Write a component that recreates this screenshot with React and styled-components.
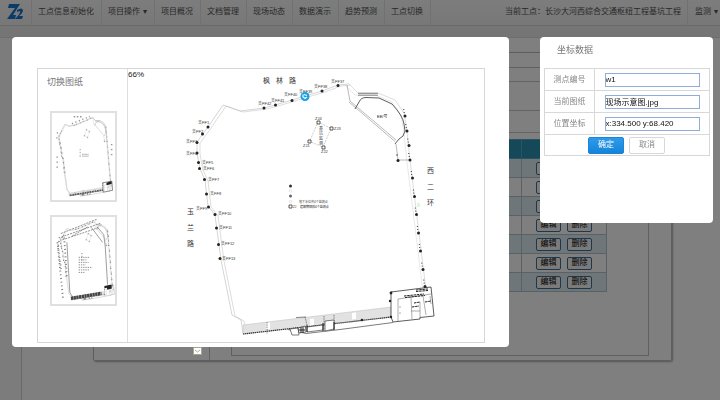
import React from "react";
import styled, { createGlobalStyle } from "styled-components";

const Global = createGlobalStyle`
  *, *::before, *::after { box-sizing: border-box; }
  html, body { margin: 0; background: #fff; }
  body, button, input {
    font-family: "Liberation Sans", "Noto Sans CJK SC", sans-serif;
    font-size: 8px;
    line-height: 12px;
  }
`;

const Page = styled.div`
  min-height: 100vh;
  display: flex;
  flex-direction: column;
  overflow: hidden;
`;

const Nav = styled.nav`
  display: flex;
  align-items: stretch;
  height: 26px;
  background: linear-gradient(#fafafa, #f0f0f0);
  border-bottom: 1px solid #d4d4d4;
  color: #505050;
`;

const LogoBox = styled.a`
  display: flex;
  align-items: center;
  width: 32px;
  padding: 0 0 2px 7px;
  border-right: 1px solid #e2e2e2;
`;

const NavLink = styled.a`
  display: flex;
  align-items: center;
  gap: 3px;
  padding: 0 ${(p) => (p.$last ? 2 : 7)}px 2px ${(p) => (p.$last ? 7 : 6)}px;
  border-right: ${(p) => (p.$last ? "0" : "1px solid #e2e2e2")};
  color: inherit;
  text-decoration: none;
  white-space: nowrap;
`;

const Project = styled.div`
  flex: 1;
  padding: 6px 6px 0 0;
  border-right: 1px solid #e2e2e2;
  text-align: right;
  white-space: nowrap;
`;

const Strip = styled.div`
  height: 12px;
  background: #ebebeb;
  border-bottom: 1px solid #ddd;
`;

const Body = styled.div`
  flex: 1;
  display: flex;
`;

const Rail = styled.aside`
  width: 22px;
  background: #f8f8f8;
  border-right: 1px solid #d0d0d0;
`;

const Main = styled.main`
  flex: 1;
  padding: 14px 48px 39px 71px;
`;

const Panel = styled.section`
  display: flex;
  height: 100%;
  border: 1px solid #bdbdbd;
  border-radius: 2px;
  box-shadow: 1px 1px 2px #aaa;
`;

const Tree = styled.div`
  width: 116px;
  border-right: 1px solid #c4c4c4;
`;

const Content = styled.div`
  flex: 1;
  padding: 14px 22px 4px 21px;
`;

const Inner = styled.div`
  height: 100%;
  border: 1px solid #c0c0c0;
`;

const Tool = styled.div`
  height: ${(p) => p.$h}px;
  border-bottom: 1px solid #c8c8c8;
`;

const Grid = styled.table`
  width: calc(100% - 51px);
  margin: 6px 0 0 10px;
  border-collapse: collapse;
  table-layout: fixed;

  th, td {
    height: 19px;
    padding: 0;
    border: 1px solid #b4c2c9;
    text-align: center;
  }
  th { background: #2a93b4; border-color: #54a9c3; }
  th:last-child { width: 85px; }
  tbody tr:nth-child(odd) { background: #dcecf4; }
`;

const RowButton = styled.button`
  width: 25px;
  height: 13px;
  margin: 0 3px;
  padding: 0;
  border: 1px solid #3f6f96;
  border-radius: 2px;
  background: #f6f6f6;
  color: #000;
  line-height: 10px;
`;

const Overlay = styled.div`
  position: fixed;
  inset: 0;
  display: flex;
  align-items: flex-start;
  gap: 31px;
  padding: 37px 7px 0 12px;
  background: rgba(0, 0, 0, 0.5);
`;

const PlanColumn = styled.div`
  flex: 1;
`;

const Dialog = styled.section`
  border-radius: 4px;
  background: #fff;
`;

const PlanDialog = styled(Dialog)`
  padding: 31px 24px 4px 25px;
`;

const PlanFrame = styled.div`
  display: flex;
  border: 1px solid #d6d6d6;
`;

const Sheets = styled.div`
  width: 90px;
  padding: 4px 10px 0 12px;
  border-right: 1px solid #dedede;
`;

const Heading = styled.h2`
  margin: 0;
  padding-left: ${(p) => p.$indent || 0}px;
  color: #777;
  font-size: 9px;
  font-weight: 400;
  line-height: 18px;
`;

const SheetHeading = styled(Heading)`
  margin: 0 0 20px -3px;
`;

const SheetButton = styled.button`
  display: block;
  width: 67px;
  height: 91px;
  margin-bottom: 13px;
  padding: 0;
  border: 2px solid #e0e0e0;
  background: #fff;
  svg { display: block; width: 100%; height: 100%; }
`;

const Canvas = styled.div`
  position: relative;
  flex: 1;
  > svg { display: block; width: 100%; height: auto; }
`;

const Zoom = styled.span`
  position: absolute;
  top: 0;
  left: 0;
  color: #222;
`;

const Handle = styled.button`
  display: flex;
  align-items: center;
  justify-content: center;
  width: 9px;
  height: 8px;
  margin-left: 181px;
  padding: 0;
  border: 1px solid #a5a58c;
  background: #fff;
`;

const FormDialog = styled(Dialog)`
  width: 173px;
  padding: 4px 3px 67px 4px;
`;

const FormTable = styled.table`
  width: 100%;
  margin-top: 9px;
  border-collapse: collapse;

  th, td {
    height: 22px;
    padding: 0;
    border: 1px solid #d8d8d8;
    color: #888;
    font-weight: 400;
    text-align: center;
  }
  th { width: 50px; }
  tr:last-child td { height: 21px; }
`;

const Field = styled.input`
  display: block;
  width: 95px;
  height: 14px;
  margin: 0 auto;
  padding: 0;
  border: 1px solid #8fadd6;
  border-radius: 0;
  background: #fff;
  color: #111;
`;

const Action = styled.button`
  width: 36px;
  height: 17px;
  margin: 0 3px 0 2px;
  padding: 0;
  border: 1px solid ${(p) => (p.$primary ? "#1a86d8" : "#d8d8d8")};
  border-radius: 2px;
  background: ${(p) => (p.$primary ? "linear-gradient(#2e9bea, #1583d8)" : "#fff")};
  color: ${(p) => (p.$primary ? "#fff" : "#888")};
`;

const Label = styled.text`
  font-family: "Liberation Sans", "Noto Sans CJK SC", sans-serif;
  font-size: ${(p) => p.$size || 3}px;
  fill: ${(p) => p.$color || "#333"};
`;

const POINTS = [
  [208, 127, 198, 123.5, "1"], [202.5, 134, 192, 133, "2"], [197, 142.5, 186, 142.5, "3"],
  [197, 153, 186, 154.5, "4"], [198.5, 162.5, 202, 163.5, "5"], [199.5, 168.5, 203, 169.5, "6"],
  [204.5, 179.5, 208, 180.5, "7"], [206.5, 194, 210, 195, "8"], [208.5, 207, 196, 209.5, "9"],
  [215, 214.5, 218, 214.5, "10"], [216.5, 228, 219, 229, "11"], [218.5, 244.5, 221, 245, "12"],
  [220, 258.5, 222, 259.5, "13"], [264, 108, 258, 104.5, "42"], [275.5, 105, 271, 101.5, "41"],
  [292, 100.5, 284, 96, "40"], [305, 96, 299, 93, "39"], [322, 91, 314, 87.5, "38"],
  [338, 85.5, 331, 82.5, "37"],
];

const EAST = [
  [405, 116], [407, 131], [409, 145.5], [410, 160], [412.5, 178], [414.5, 196.5],
  [416.5, 214.5], [418.5, 233], [420.5, 251], [423, 269.5], [425, 286.5],
];

const WEST_LINE =
  "348,84 338,85 322,91 305,96 292,100 275,105 264,108 240,111 223,105 208,127 197,142 197,153 200,169 205,180 208,206 215,215 221,260 232,315 241,320 243,333";
const EAST_LINE = "348,83 358,93 378,93 395,100 404,113 407,131 410,160 426,290";

function Geometry({ thumb }) {
  return (
    <g fill="none" strokeWidth={thumb ? 1 : 0.5}>
      <polyline points={WEST_LINE} stroke="#aaa" />
      <polyline points={WEST_LINE} stroke="#bbb" transform="translate(3 1)" />
      <polyline points={EAST_LINE} stroke="#bbb" />
      <polyline points={EAST_LINE} stroke="#d2d2d2" transform="translate(-3 2)" />
      <path d="M358 93.3H378M358 95.2H378" stroke="#555" strokeWidth="0.7" />
      <path d="M347 85L350 101L396 140M349 102L395 141.5M396 144L398 160H410" stroke="#aaa" strokeWidth="0.8" />
      <path d="M355 109L359 102Q361 97.5 366 97.5L379 98L392 104Q403 116 404 124L405 131L403 136L399 139L395 144" stroke="#333" strokeWidth="0.8" />
      <polygon points="243,325 391,307 391,317 243,334" fill="#e2e2e2" stroke="#bbb" />
      <path d="M243 334L291 328.5L340 323L391 317" stroke="#333" strokeWidth="1.2" strokeDasharray="1.4 0.6" />
      <path d="M288 329.5L306 333.5L340 329.5L393 322.5" stroke="#444" strokeWidth="0.7" />
      <path d="M266 323L270 322.5V329L266 329.5ZM310 319L314 318.5V325L310 325.5ZM352 313L356 312.5V319L352 319.5Z" fill="#fff" />
      <path d="M267 322V334M305 317L307 325M324 316V331M334 315V330" stroke="#555" strokeWidth="0.7" strokeDasharray="1.5 0.8" />
      <path d="M296 317.5L306 317" stroke="#555" strokeWidth="0.7" />
      <path d="M290 329L298 328L299 335L292 335ZM298 328L305 326L306 332L299 333ZM307 327L323 325V330L307 332ZM325 321L334 320V329L325 331Z" fill="#fff" stroke="#444" strokeWidth="0.7" />
      <path d="M299 330H305M301 327V333M303 327V333M307 325V332M323 323V331M334 322V330" stroke="#222" strokeWidth="1" />
      <path d="M391 292L431 287L434 316L420 317.5V319L393 322L391 317Z" fill="#fff" stroke="#333" strokeWidth="0.8" />
      <path d="M398 299V321M398 299L431 294M411 297L412 319M399 307H401M399 313H401M423 296L426 315M420 318V302M411 311H420M430 296L431 304" stroke="#777" strokeWidth="0.6" />
      <path d="M404 296L424 294M405 297.5L425 295.5M416 290L428 289M416 291.5L428 290.5M414 303L420 302M425 302L431 301M412 307L419 306" stroke="#222" strokeWidth="1" strokeDasharray="2.5 0.7" />
      <g fill="#222">
        {POINTS.map(([x, y]) => <circle key={`${x}-${y}`} cx={x} cy={y} r="1.5" />)}
        {EAST.map(([x, y]) => (
          <g key={y}>
            <circle cx={x} cy={y} r="1.5" />
            <circle cx={x - 0.8} cy={y - 3.5} r="0.6" />
            <circle cx={x - 1.2} cy={y - 6.5} r="0.6" />
          </g>
        ))}
        <circle cx="398" cy="160.5" r="1.5" />
        <circle cx="397" cy="155" r="0.7" />
        <circle cx="391" cy="293" r="1.4" />
        <circle cx="390" cy="301" r="1.2" />
        <circle cx="391" cy="317" r="1.2" />
        <circle cx="362" cy="320" r="1.3" />
      </g>
      <path d="M318 122L331 128.5L323 147L309.5 141.5Z" stroke="#999" strokeDasharray="2 1" />
      <path
        d="M317 121h3v3h-3zM330 127h3v3h-3zM322 146h3v3h-3zM308 140h3v3h-3zM289 205h3v3h-3z"
        stroke="#333"
        strokeWidth="0.8"
        fill="#fff"
      />
      <circle cx="290.5" cy="186" r="1.5" fill="#333" />
      <circle cx="290.5" cy="191" r="1.3" stroke="#ccc" />
      <circle cx="290.5" cy="196" r="1.5" fill="#666" />
      <circle cx="290.5" cy="201.5" r="1.3" stroke="#ccc" />
    </g>
  );
}

const ROADS = [
  ["枫", 263, 83], ["林", 276, 83], ["路", 289, 83],
  ["西", 427, 173], ["二", 427, 189], ["环", 427, 205],
  ["玉", 187, 214], ["兰", 187, 230], ["路", 187, 246],
];

function Plan() {
  return (
    <svg viewBox="128 69 356 273" role="img" aria-label="现场示意图">
      <Geometry />
      {POINTS.map(([, , x, y, n]) => <Label key={n} x={x} y={y} $size={4}>支FF{n}</Label>)}
      <Label x="315" y="120" $size={4}>ZJ4</Label>
      <Label x="334" y="130" $size={4}>ZJ3</Label>
      <Label x="321" y="153" $size={4}>ZJ2</Label>
      <Label x="303" y="147" $size={4}>ZJ1</Label>
      {["基", "坑", "监", "测"].map((c, i) => (
        <Label key={c} x="319" y={130 + i * 5} $size={4}>{c}</Label>
      ))}
      <Label x="377" y="118" $size={4} $color="#111">EE/号</Label>
      <Label x="299" y="203">地下水位共4个监测点</Label>
      <Label x="293" y="208">ZJ</Label>
      <Label x="300" y="208" $color="#111">建筑物倾斜4个监测点</Label>
      {ROADS.map(([c, x, y]) => (
        <Label key={`${c}${x}`} x={x} y={y} $size={7}>{c}</Label>
      ))}
      <circle cx="305" cy="96.5" r="4.5" fill="#18a0e8" />
      <path d="M303 94.5V97L305 98.5L307 97M304 94.5L307 95.5" fill="none" stroke="#fff" strokeWidth="1.2" />
      <rect x="417" y="203" width="3" height="4" fill="#e3f4e3" />
    </svg>
  );
}

function Thumb({ detailed }) {
  return (
    <svg viewBox="166 69 279 278" preserveAspectRatio="none" aria-hidden="true">
      {detailed ? (
        <g stroke="#777" fill="none" strokeWidth="3">
          <g transform="translate(8 0)"><Geometry thumb /></g>
          <path d="M205 122L365 76M208 133L380 89M212 142L372 103M255 130L325 100" strokeDasharray="9 4" />
          <path d="M200 134L192 165L215 330M190 150L207 240M220 135L232 260" strokeDasharray="3 9" strokeWidth="8" />
          <path d="M284 198H330M284 206H318M284 214H328M284 222H315M284 230H345M284 238H330M284 246H312" strokeDasharray="6 4" />
          <path d="M340 102L390 150M365 100L395 125L402 165L412 285M232 150L245 310L262 330" stroke="#888" />
          <path d="M250 329L385 313" stroke="#444" strokeWidth="11" strokeDasharray="10 2" />
          <path d="M399 293L430 288M410 298L430 294" stroke="#222" strokeWidth="7" />
        </g>
      ) : (
        <g fill="none" stroke="#999" strokeWidth="3">
          <Geometry thumb />
          <polyline points={WEST_LINE} stroke="#ccc" strokeWidth="2" />
          <polyline points={EAST_LINE} stroke="#ccc" strokeWidth="2" />
          <path d="M262 81H300" strokeDasharray="7 7" strokeWidth="5" />
          <path d="M190 130L187 155M202 163L224 260M254 103L334 80" strokeDasharray="5 11" strokeWidth="5" />
          <path d="M189 208V246M430 168V204" strokeDasharray="4 12" strokeWidth="7" />
          <path d="M299 201H329M299 207H329" strokeDasharray="5 1" />
          <path d="M245 332L391 315" stroke="#555" strokeDasharray="8 3" strokeWidth="5" />
          <path d="M391 292L431 287L434 316L393 322Z" stroke="#555" strokeWidth="2" />
          <path d="M408 296L430 291" stroke="#222" strokeWidth="8" />
        </g>
      )}
    </svg>
  );
}

const Logo = () => (
  <svg width="18" height="16" viewBox="0 0 18 16" aria-hidden="true">
    <path d="M2 0H13L6 11H9L8 15H0L8 4H1Z" fill="#1676d2" />
    <path d="M10 6Q15 3 16 6Q16 9 12 12H16L15 15H8Q14 9 13 7L10 8Z" fill="#1676d2" />
  </svg>
);

const NAV = [
  { text: "工点信息初始化" },
  { text: "项目操作", menu: true },
  { text: "项目概况" },
  { text: "文档管理" },
  { text: "现场动态" },
  { text: "数据演示" },
  { text: "趋势预测" },
  { text: "工点切换" },
];

const FIELDS = [
  ["point", "测点编号", "w1"],
  ["sheet", "当前图纸", "现场示意图.jpg"],
  ["position", "位置坐标", "x:334.500 y:68.420"],
];

export default function App() {
  return (
    <>
      <Global />
      <Page>
        <Nav>
          <LogoBox href="#" aria-label="首页"><Logo /></LogoBox>
          {NAV.map(({ text, menu }) => (
            <NavLink key={text} href="#">
              <span>{text}</span>
              {menu && <span>▾</span>}
            </NavLink>
          ))}
          <Project>当前工点：长沙大河西综合交通枢纽工程基坑工程</Project>
          <NavLink href="#" $last><span>监测</span><span>▾</span></NavLink>
        </Nav>
        <Strip />
        <Body>
          <Rail />
          <Main>
            <Panel>
              <Tree />
              <Content>
                <Inner>
                  <Tool $h={14} />
                  <Tool $h={29} />
                  <Tool $h={22} />
                  <Grid>
                    <thead><tr><th /><th /><th /><th /></tr></thead>
                    <tbody>
                      {[1, 2, 3, 4, 5, 6, 7].map((n) => (
                        <tr key={n}>
                          <td /><td /><td />
                          <td>
                            <RowButton>编辑</RowButton>
                            <RowButton>删除</RowButton>
                          </td>
                        </tr>
                      ))}
                    </tbody>
                  </Grid>
                </Inner>
              </Content>
            </Panel>
          </Main>
        </Body>
      </Page>
      <Overlay>
        <PlanColumn>
          <PlanDialog role="dialog" aria-label="切换图纸">
            <PlanFrame>
              <Sheets>
                <SheetHeading>切换图纸</SheetHeading>
                <SheetButton aria-label="图纸一"><Thumb /></SheetButton>
                <SheetButton aria-label="图纸二"><Thumb detailed /></SheetButton>
              </Sheets>
              <Canvas>
                <Plan />
                <Zoom>66%</Zoom>
              </Canvas>
            </PlanFrame>
          </PlanDialog>
          <Handle aria-label="展开">
            <svg width="5" height="4" viewBox="0 0 5 4"><path d="M0 1L2.5 3L5 1" fill="none" stroke="#aaa" /></svg>
          </Handle>
        </PlanColumn>
        <FormDialog role="dialog" aria-label="坐标数据">
          <Heading $indent={13}>坐标数据</Heading>
          <FormTable>
            <tbody>
              {FIELDS.map(([id, label, value]) => (
                <tr key={id}>
                  <th><label htmlFor={id}>{label}</label></th>
                  <td><Field id={id} defaultValue={value} /></td>
                </tr>
              ))}
              <tr>
                <td colSpan={2}>
                  <Action $primary>确定</Action>
                  <Action>取消</Action>
                </td>
              </tr>
            </tbody>
          </FormTable>
        </FormDialog>
      </Overlay>
    </>
  );
}
